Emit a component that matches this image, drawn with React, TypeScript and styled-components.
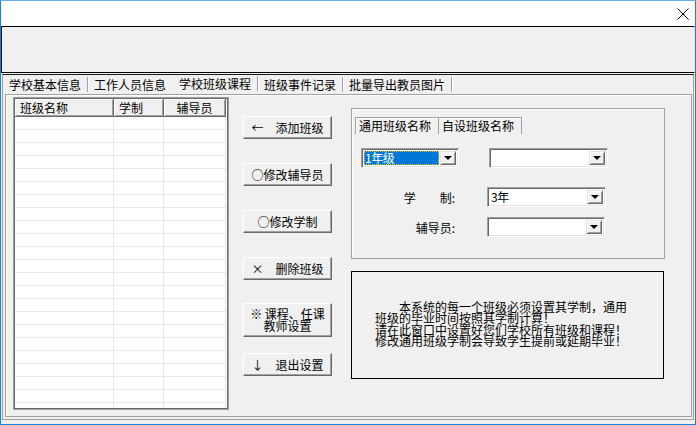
import React from "react";
import styled, { createGlobalStyle } from "styled-components";

const GlobalStyle = createGlobalStyle`
    html, body {
        margin: 0;
        padding: 0;
        background: #ffffff;
    }
    body {
        font-family: "Noto Sans CJK SC", "Noto Sans", sans-serif;
        font-size: 12px;
        color: #000000;
    }
    * {
        box-sizing: border-box;
    }
`;

const Window = styled.div`
    width: 696px;
    height: 425px;
    display: flex;
    flex-direction: column;
    background: #f0f0f0;
    border: 1px solid #1883d7;
    border-top-color: #6aaee6;
    overflow: hidden;
`;

const TitleBar = styled.div`
    height: 25px;
    flex: none;
    display: flex;
    align-items: center;
    justify-content: flex-end;
    padding-right: 6px;
    background: #ffffff;
`;

const TopPanel = styled.div`
    height: 47px;
    flex: none;
    background: #f0f0f0;
    border-top: 1px solid #000000;
    border-left: 1px solid #000000;
    border-bottom: 1px solid #000000;
    border-right: 1px solid #e3e3e3;
`;

const Client = styled.div`
    flex: 1;
    display: flex;
    flex-direction: column;
    margin: 1px 1px 4px 1px;
    padding: 0 1px 2px 2px;
    border-top: 1px solid #1a1a1a;
    border-left: 1px solid #a0a0a0;
    border-right: 1px solid #a0a0a0;
    border-bottom: 1px solid #a0a0a0;
`;

const TabStrip = styled.div`
    height: 19px;
    flex: none;
    display: flex;
    align-items: center;
    margin-left: -1px;
`;

const Tab = styled.div<{ $active?: boolean; $sep?: boolean }>`
    height: 15px;
    line-height: 15px;
    padding: 0 6px 0 5px;
    margin-bottom: ${p => (p.$active ? 2 : 0)}px;
    white-space: nowrap;
    border-right: 1px solid ${p => (p.$sep ? "#a0a0a0" : "transparent")};
    box-shadow: ${p => (p.$sep ? "1px 0 0 #ffffff" : "none")};
    margin-right: 1px;
`;

const TabPanel = styled.div`
    flex: 1;
    display: flex;
    align-items: flex-start;
    padding: 2px 0 0 7px;
    border: 1px solid #a0a0a0;
    box-shadow: inset 1px 1px 0 #ffffff;
`;

const ListBox = styled.div`
    width: 216px;
    height: 313px;
    flex: none;
    display: flex;
    flex-direction: column;
    padding: 1px;
    background: #ffffff;
    border: 1px solid #a0a0a0;
    box-shadow: inset 1px 1px 0 #696969, inset -1px -1px 0 #696969;
`;

const ListHeader = styled.div`
    height: 18px;
    flex: none;
    display: flex;
`;

const HeaderCell = styled.div<{ $w: number; $center?: boolean }>`
    width: ${p => p.$w}px;
    line-height: 17px;
    padding-left: ${p => (p.$center ? 0 : 5)}px;
    text-align: ${p => (p.$center ? "center" : "left")};
    background: #f0f0f0;
    border-right: 1px solid #696969;
    border-bottom: 1px solid #696969;
    box-shadow: inset 1px 1px 0 #ffffff, inset -1px -1px 0 #a0a0a0;
`;

const ListBody = styled.div`
    flex: 1;
    display: flex;
    background: repeating-linear-gradient(to bottom, transparent 0 12px, #e8e8e8 12px 13px);
`;

const BodyCol = styled.div<{ $w: number }>`
    width: ${p => p.$w}px;
    border-right: 1px solid #e8e8e8;
`;

const ButtonCol = styled.div`
    width: 89px;
    flex: none;
    margin-left: 14px;
    padding-top: 19px;
    display: flex;
    flex-direction: column;
    gap: 24px;
`;

const Button = styled.button<{ $tall?: boolean }>`
    width: 89px;
    height: ${p => (p.$tall ? 34 : 23)}px;
    margin: ${p => (p.$tall ? "-1px 0 -8px" : "0")};
    padding: 0;
    display: flex;
    align-items: center;
    justify-content: center;
    font: inherit;
    line-height: ${p => (p.$tall ? 12 : 14)}px;
    white-space: pre;
    text-align: center;
    color: #000000;
    background: #f0f0f0;
    border-top: 1px solid #ffffff;
    border-left: 1px solid #ffffff;
    border-right: 1px solid #696969;
    border-bottom: 1px solid #696969;
    box-shadow: inset -1px -1px 0 #a0a0a0;
`;

const RightCol = styled.div`
    width: 314px;
    flex: none;
    margin-left: 19px;
    padding-top: 11px;
    display: flex;
    flex-direction: column;
`;

const Frame = styled.div`
    height: 151px;
    display: flex;
    flex-direction: column;
    align-items: flex-start;
    padding-top: 8px;
    border: 1px solid #a0a0a0;
    box-shadow: inset 1px 1px 0 #ffffff;
`;

const InnerTabs = styled.div`
    display: flex;
    margin-left: 3px;
    border-top: 1px solid #a0a0a0;
    border-left: 1px solid #a0a0a0;
    box-shadow: inset 1px 1px 0 #ffffff;
`;

const InnerTab = styled.div`
    height: 16px;
    line-height: 15px;
    padding: 0 7px 0 3px;
    white-space: nowrap;
    border-right: 1px solid #a0a0a0;
`;

const FormRow = styled.div<{ $top: number; $left?: number }>`
    display: flex;
    align-items: flex-start;
    margin-top: ${p => p.$top}px;
    padding-left: ${p => p.$left ?? 0}px;
    gap: 30px;
`;

const FieldLabel = styled.div`
    width: 103px;
    margin-right: 2px;
    padding-top: 4px;
    text-align: right;
    white-space: pre;
    line-height: 14px;
`;

const Combo = styled.div<{ $w: number }>`
    width: ${p => p.$w}px;
    height: 20px;
    display: flex;
    padding: 2px;
    background: #ffffff;
    border-top: 1px solid #a0a0a0;
    border-left: 1px solid #a0a0a0;
    border-right: 1px solid #ffffff;
    border-bottom: 1px solid #ffffff;
    box-shadow: inset 1px 1px 0 #696969, inset -1px -1px 0 #e3e3e3;
`;

const ComboValue = styled.div<{ $selected?: boolean }>`
    flex: 1;
    margin-right: 1px;
    padding-left: 1px;
    line-height: 14px;
    font-size: 12px;
    letter-spacing: -0.5px;
    color: ${p => (p.$selected ? "#ffffff" : "#000000")};
    background: ${p => (p.$selected ? "#0078d7" : "transparent")};
    outline: ${p => (p.$selected ? "1px dotted #f0c000" : "none")};
    outline-offset: -1px;
`;

const DropButton = styled.div`
    width: 16px;
    height: 14px;
    flex: none;
    display: flex;
    align-items: center;
    justify-content: center;
    background: #f0f0f0;
    border-top: 1px solid #e3e3e3;
    border-left: 1px solid #e3e3e3;
    border-right: 1px solid #696969;
    border-bottom: 1px solid #696969;
    box-shadow: inset 1px 1px 0 #ffffff, inset -1px -1px 0 #a0a0a0;
`;

const Arrow = styled.span`
    width: 0;
    height: 0;
    border-left: 4px solid transparent;
    border-right: 4px solid transparent;
    border-top: 4px solid #000000;
`;

const Notice = styled.div`
    width: 313px;
    height: 108px;
    margin-top: 12px;
    padding: 29px 0 0 23px;
    border: 1px solid #000000;
    white-space: pre;
    line-height: 11.4px;
`;

const ComboBox = ({ width, value, selected }: { width: number; value?: string; selected?: boolean }) => (
    <Combo $w={width}>
        <ComboValue $selected={selected}>{value}</ComboValue>
        <DropButton>
            <Arrow />
        </DropButton>
    </Combo>
);

const CloseIcon = () => (
    <svg width="12" height="12" viewBox="0 0 12 12">
        <path d="M0.5 0.5 L11.5 11.5 M11.5 0.5 L0.5 11.5" stroke="#000" strokeWidth="1" fill="none" />
    </svg>
);

const tabs = [
    { label: "学校基本信息", sep: true },
    { label: "工作人员信息", sep: false },
    { label: "学校班级课程", sep: true, active: true },
    { label: "班级事件记录", sep: true },
    { label: "批量导出教员图片", sep: true },
];

const columns = [
    { label: "班级名称", width: 99 },
    { label: "学制", width: 50 },
    { label: "辅导员", width: 62, center: true },
];

const notice = "　　本系统的每一个班级必须设置其学制，通用\n班级的毕业时间按照其学制计算！\n请在此窗口中设置好您们学校所有班级和课程！\n修改通用班级学制会导致学生提前或延期毕业！";

export default function App() {
    return (
        <>
            <GlobalStyle />
            <Window>
                <TitleBar>
                    <CloseIcon />
                </TitleBar>
                <TopPanel />
                <Client>
                    <TabStrip>
                        {tabs.map(t => (
                            <Tab key={t.label} $active={t.active} $sep={t.sep}>
                                {t.label}
                            </Tab>
                        ))}
                    </TabStrip>
                    <TabPanel>
                        <ListBox>
                            <ListHeader>
                                {columns.map(c => (
                                    <HeaderCell key={c.label} $w={c.width} $center={c.center}>
                                        {c.label}
                                    </HeaderCell>
                                ))}
                            </ListHeader>
                            <ListBody>
                                {columns.map(c => (
                                    <BodyCol key={c.label} $w={c.width} />
                                ))}
                            </ListBody>
                        </ListBox>

                        <ButtonCol>
                            <Button>{"←　添加班级"}</Button>
                            <Button>{"○修改辅导员"}</Button>
                            <Button>{"○修改学制"}</Button>
                            <Button>{"×　删除班级"}</Button>
                            <Button $tall>{"※ 课程、任课\n教师设置"}</Button>
                            <Button>{"↓　退出设置"}</Button>
                        </ButtonCol>

                        <RightCol>
                            <Frame>
                                <InnerTabs>
                                    <InnerTab>通用班级名称</InnerTab>
                                    <InnerTab>自设班级名称</InnerTab>
                                </InnerTabs>
                                <FormRow $top={14} $left={9}>
                                    <ComboBox width={98} value="1年级" selected />
                                    <ComboBox width={119} />
                                </FormRow>
                                <FormRow $top={19}>
                                    <FieldLabel>{"学　　制:"}</FieldLabel>
                                    <ComboBox width={119} value="3年" />
                                </FormRow>
                                <FormRow $top={10}>
                                    <FieldLabel>辅导员:</FieldLabel>
                                    <ComboBox width={118} />
                                </FormRow>
                            </Frame>
                            <Notice>{notice}</Notice>
                        </RightCol>
                    </TabPanel>
                </Client>
            </Window>
        </>
    );
}
